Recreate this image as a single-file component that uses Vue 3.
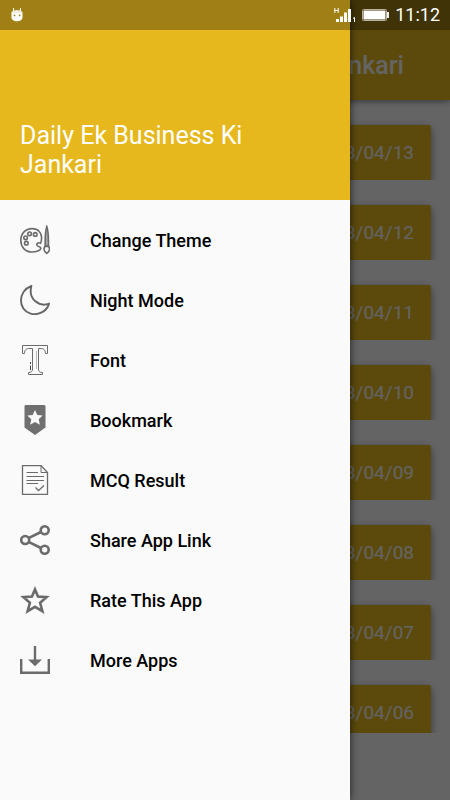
<script setup>
const title = 'Daily Ek Business Ki Jankari'
const days = ['13', '12', '11', '10', '09', '08', '07', '06']
const items = [
  { icon: 'theme', label: 'Change Theme' },
  { icon: 'night', label: 'Night Mode' },
  { icon: 'font', label: 'Font' },
  { icon: 'bookmark', label: 'Bookmark' },
  { icon: 'result', label: 'MCQ Result' },
  { icon: 'share', label: 'Share App Link' },
  { icon: 'rate', label: 'Rate This App' },
  { icon: 'more', label: 'More Apps' }
]
</script>

<template>
  <div class="app">
    <header class="toolbar"><h1>{{ title }}</h1></header>
    <main class="list">
      <div v-for="d in days" :key="d" class="row">
        <a href="#" class="card">2023/04/{{ d }}</a>
      </div>
    </main>
    <footer class="banner"></footer>

    <div class="scrim"></div>

    <aside class="drawer">
      <div class="drawer-head"><h2>{{ title }}</h2></div>
      <nav class="menu">
        <a v-for="item in items" :key="item.icon" href="#" class="item">
          <svg class="icon" viewBox="0 0 30 30" width="30" height="30" aria-hidden="true">
            <g v-if="item.icon === 'theme'" fill="none" stroke="#6b6b6b" stroke-width="1.6">
              <path d="M20.6 18.2C18.5 17.3 16.6 18 16.8 20C17 22 20.8 21 20.8 23.2C20.8 25.4 15.8 27 12 27C5 27 .8 21.8 .8 15.3C.8 8.4 5.6 3.6 12 3.6C18 3.6 21.6 7.6 21.6 12.6C21.6 15 21.4 16.6 20.6 18.2Z" />
              <circle cx="6.3" cy="18.2" r="1.8" />
              <circle cx="5.6" cy="12.8" r="1.8" />
              <circle cx="9.6" cy="8.8" r="1.8" />
              <circle cx="15.2" cy="9.4" r="1.8" />
              <path d="M26.8 1.6C25.7 5 25 14 25.2 21.4H28.4C28.6 14 27.9 5 26.8 1.6Z" fill="#aaa" />
              <path d="M25 21.2C23.2 23.6 24 26.3 26.8 28.4C29.6 26.3 30.2 23.6 28.6 21.2Z" />
            </g>
            <path v-else-if="item.icon === 'night'" d="M11.4 1C-2.5 6.2-2.2 24.8 10.6 28.6C18 30.7 26.6 26.8 29.1 18.6C19.8 22.3 7.7 14.7 11.4 1Z" fill="none" stroke="#666" stroke-width="1.9" stroke-linejoin="round" />
            <g v-else-if="item.icon === 'font'" fill="none" stroke="#6b6b6b" stroke-width="1">
              <path d="M2.5 .5H27.5V8.5H25.5C25.2 4.5 23.7 3.5 20 3.5H18.5V24C18.5 26.4 19.3 27.2 22.5 27.5V29.5H8.5V27.5C11.4 27.2 12.5 26.6 12.5 24V3.5H10C6 3.5 4.8 4.6 4.5 8.5H2.5Z" />
              <path d="M16.5 6V24" stroke="#bbb" />
              <path d="M10.5 17V19M10.5 20.5V25" stroke="#444" />
            </g>
            <g v-else-if="item.icon === 'bookmark'">
              <path d="M5.5 0H24.5L25.5 1V22.5L15 30L4.5 22.5V1Z" fill="#6f6f6f" />
              <path d="M15 5L17.3 9.9L22.6 10.4L18.7 14.2L19.9 19.8L15 17L10.1 19.8L11.3 14.2L7.4 10.4L12.7 9.9Z" fill="#fafafa" />
            </g>
            <g v-else-if="item.icon === 'result'" fill="none" stroke="#6b6b6b">
              <path d="M2.5 .5H21L27.5 7.5V29.5H2.5Z" stroke-width="1.3" />
              <path d="M21 .5V7.5H27.5" />
              <path d="M6.5 7.5H18M6.5 11.5H24M6.5 15.5H24M6.5 18.5H18" stroke-width="1.2" />
              <path d="M15.5 22.5L18.5 25.5L24 20.5" stroke-width="1.3" />
            </g>
            <g v-else-if="item.icon === 'share'" fill="none" stroke="#6b6b6b" stroke-width="2.6">
              <path d="M8.5 13.2L21 7M8.5 16.8L21 23" />
              <circle cx="5.2" cy="15" r="4" />
              <circle cx="24.7" cy="5.3" r="4" />
              <circle cx="24.7" cy="24.7" r="4" />
            </g>
            <path v-else-if="item.icon === 'rate'" d="M15 4.4L18 11.6L26.6 12.2L20.1 17.8L22.4 26.2L15 21.8L7.6 26.2L9.9 17.8L3.4 12.2L12 11.6Z" fill="none" stroke="#6b6b6b" stroke-width="2.6" />
            <g v-else fill="none" stroke="#6b6b6b" stroke-width="2.4">
              <path d="M1.2 14V27.8H28.8V14" />
              <path d="M15 1V15" />
              <path d="M8 14.5H22L15 21.2Z" fill="#6b6b6b" stroke="none" />
            </g>
          </svg>
          <span>{{ item.label }}</span>
        </a>
      </nav>
    </aside>

    <div class="status">
      <svg class="robot" viewBox="0 0 12 14" width="12" height="14" aria-hidden="true">
        <path d="M2.6 0V4M9.4 0V4" stroke="#fff" stroke-width="1" />
        <path d="M.5 4.8C.5 1.4 11.5 1.4 11.5 4.8V9.2C11.5 14.6 .5 14.6 .5 9.2Z" fill="#fff" />
        <path d="M1 4H11" stroke="#e3d9b8" stroke-width="1" />
        <circle cx="3.5" cy="7.4" r=".9" fill="#9f8016" />
        <circle cx="8.6" cy="7.4" r=".9" fill="#9f8016" />
      </svg>
      <svg class="signal" viewBox="0 0 22 15" width="22" height="15" aria-hidden="true">
        <path d="M.8 0V5M4.2 0V5M.8 2.5H4.2" stroke="#fff" stroke-width="1" fill="none" />
        <path d="M2 11H5V14H2ZM6 8.5H9V14H6ZM10 4.5H13V14H10ZM14 1H17V14H14Z" fill="#fff" />
        <path d="M19 10.4L20.5 9.5V14" stroke="#fff" stroke-width="1" fill="none" />
      </svg>
      <svg class="battery" viewBox="0 0 27 12" width="27" height="12" aria-hidden="true">
        <rect x=".5" y=".5" width="24" height="11" rx="1" fill="none" stroke="#b9b1a0" />
        <rect x="1.5" y="1.5" width="22" height="9" fill="#fff" />
        <path d="M25 3H27V9H25Z" fill="#eee" />
      </svg>
      <time>11:12</time>
    </div>
  </div>
</template>

<style>
body {
  margin: 0;
  background: #646464;
}
</style>

<style scoped>
.app {
  position: relative;
  display: flex;
  flex-direction: column;
  height: 100vh;
  overflow: hidden;
  background: #fafafa;
  font-family: Roboto, "Liberation Sans", sans-serif;
}
h1,
h2 {
  margin: 0;
}
a {
  text-decoration: none;
}
.toolbar {
  display: flex;
  flex: none;
  align-items: center;
  justify-content: flex-end;
  box-sizing: border-box;
  height: 100px;
  padding: 32px 46px 0 20px;
  background: #e6b81e;
  box-shadow: 0 2px 6px rgba(0, 0, 0, 0.4);
  z-index: 1;
}
.toolbar h1 {
  color: #fafafa;
  font-size: 25px;
  font-weight: 500;
  line-height: 30px;
  white-space: nowrap;
}
.list {
  flex: 1;
  min-height: 0;
  overflow: hidden;
}
.row {
  padding: 25px 19px 0;
  overflow: hidden;
}
.card {
  display: flex;
  align-items: center;
  justify-content: flex-end;
  height: 55px;
  padding: 0 17px;
  border-radius: 2px;
  background: #e6b81e;
  box-shadow: 0 3px 8px rgba(0, 0, 0, 0.45);
  color: #fafafa;
  font-size: 19px;
}
.banner {
  flex: none;
  height: 67px;
}
.scrim {
  position: absolute;
  inset: 0;
  z-index: 2;
  background: rgba(0, 0, 0, 0.6);
}
.drawer {
  position: absolute;
  top: 0;
  bottom: 0;
  left: 0;
  z-index: 3;
  width: 350px;
  max-width: 85%;
  background: #fafafa;
  box-shadow: 0 0 8px rgba(0, 0, 0, 0.7);
}
.drawer-head {
  display: flex;
  align-items: flex-end;
  box-sizing: border-box;
  height: 200px;
  padding: 0 60px 21px 20px;
  background: #e6b81e;
}
.drawer-head h2 {
  color: #fff;
  font-size: 25px;
  font-weight: 400;
  line-height: 29px;
}
.menu {
  padding-top: 10px;
}
.item {
  display: flex;
  align-items: center;
  gap: 40px;
  height: 60px;
  padding: 0 20px;
  color: #000;
  font-size: 18px;
  font-weight: 500;
}
.icon {
  flex: none;
}
.status {
  position: absolute;
  inset: 0 0 auto;
  z-index: 4;
  display: flex;
  align-items: center;
  height: 30px;
  padding: 0 10px 0 11px;
  background: rgba(0, 0, 0, 0.3);
  color: #fff;
}
.signal {
  margin-left: auto;
}
.battery {
  margin: 0 6px;
}
.status time {
  font-size: 18px;
  line-height: 30px;
}
</style>
